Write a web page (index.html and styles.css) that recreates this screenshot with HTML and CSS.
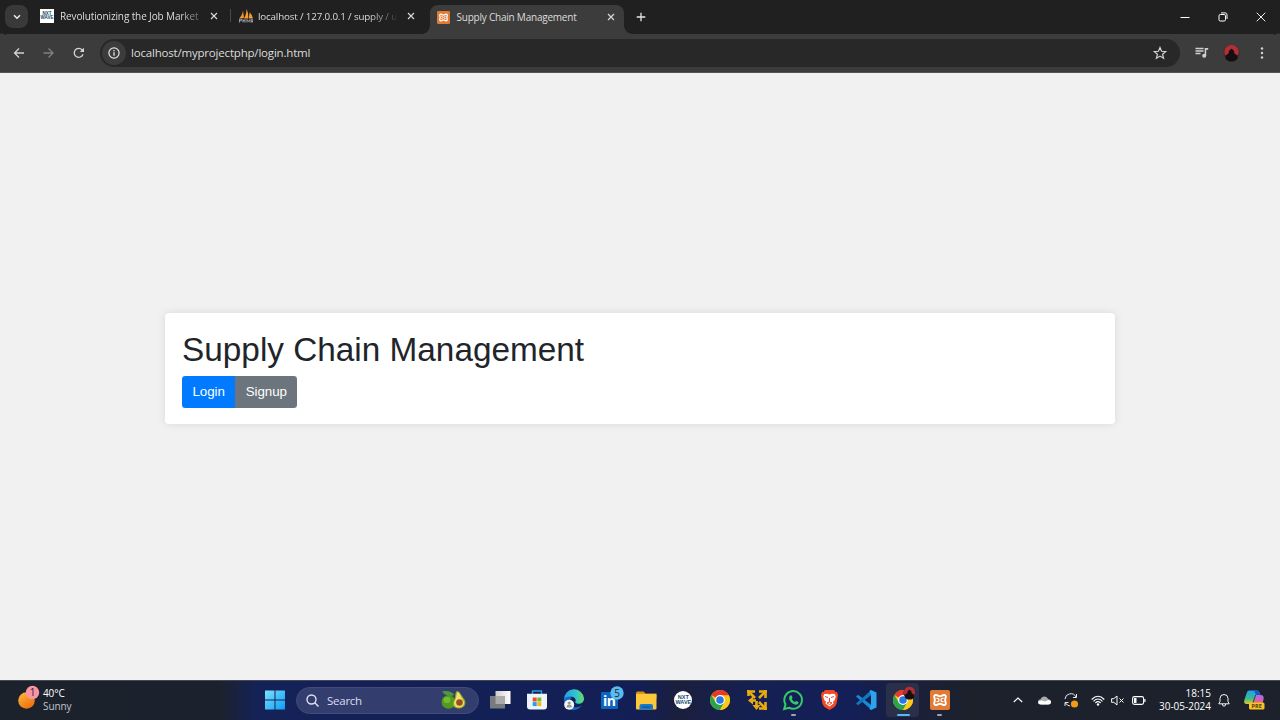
FILE: index.html
```html
<!DOCTYPE html>
<html lang="en">
<head>
<meta charset="utf-8">
<title>Supply Chain Management</title>
<link rel="stylesheet" href="styles.css">
</head>
<body>
<svg class="defs" width="0" height="0">
  <symbol id="chrome" viewBox="0 0 20 20">
    <circle cx="10" cy="10" r="10" fill="#f8c51c"/>
    <path d="M10 10 1.34 5A10 10 0 0 1 18.66 5z" fill="#e33b2e"/>
    <path d="M1.34 5A10 10 0 0 0 10 20L14.3 12.5 10 10 5.7 12.5z" fill="#2ba24c"/>
    <path d="M10 5.2h8.8A10 10 0 0 1 10 20l4.3-7.5z" fill="#fbc916"/>
    <circle cx="10" cy="10" r="4.9" fill="#fff"/><circle cx="10" cy="10" r="3.8" fill="#2878e8"/>
  </symbol>
  <symbol id="xampp" viewBox="0 0 20 20">
    <rect width="20" height="20" rx="2" fill="#e07a34"/>
    <path d="M7 5.200C4.500 4.300 3.700 6 4.500 8c.4 1 .4 3 0 4-.8 2 0 3.700 2.500 2.800 1.200-.5 1.800-1 3-1s1.800.5 3 1c2.500.9 3.300-.8 2.500-2.800-.4-1-.4-3 0-4 .8-2 0-3.700-2.500-2.800-1.200.5-1.800 1-3 1s-1.800-.5-3-1z" fill="none" stroke="#fff" stroke-width="2"/>
    <path d="M6.500 8.300h1q1.500 0 1.500 1.700t-1.500 1.700h-1M13.500 8.300h-1Q11 8.300 11 10t1.500 1.700h1" fill="none" stroke="#fff" stroke-width="1.300"/>
  </symbol>
  <symbol id="close" viewBox="0 0 8 8"><path d="m1 1 6 6M7 1 1 7" stroke="#d8d8d8" stroke-width="1.200"/></symbol>
  <symbol id="avatar" viewBox="0 0 18 18">
    <circle cx="9" cy="9" r="8.500" fill="#45282b"/><path d="M2 11C0 5 4 .5 9 .5S18 5 16 11z" fill="#b52e37"/>
    <path d="M2.500 13c1-2 2-3 3.500-3.500C5.500 7 7.500 5 9 4.500c1.500.5 3.500 2.500 3 5 1.500.5 2.500 1.500 3.500 3.500 0 3.500-3 5-6.500 5S2.500 16.500 2.500 13z" fill="#160f12"/>
  </symbol>
</svg>

<header class="tabstrip">
  <button class="tab-search"><svg width="8" height="6" viewBox="0 0 8 6"><path d="m1 1.200 3 3 3-3" fill="none" stroke="#eee" stroke-width="1.500"/></svg></button>
  <div class="tab tab-first">
    <span class="favicon nxt-fav"><i>NXT</i><i>WAVE</i></span>
    <span class="tab-title fade">Revolutionizing the Job Market</span>
    <svg class="tab-x" width="8" height="8"><use href="#close"/></svg>
  </div>
  <div class="tab tab-second">
    <svg class="favicon" width="14" height="14" viewBox="0 0 14 14"><path d="M0 9.500C2 8 3.500 5 4 1.500L5 9zM5 9.500C6.500 7 7.500 4 7.500 0 9 3 9.500 6 9.200 9.500zM9.800 9.500l.8-6C12.500 5 13.500 7.500 14 9.500z" fill="#f39b2b"/><path d="M.5 13.500v-3.300h2v1.500h-2M4 10v3.500M6 10v3.500M4 11.700h2M8 13.500v-3l1.500 2 1.500-2v3M12.300 13.500l.7-3.300.7 3.300" fill="none" stroke="#a4a7b8" stroke-width=".9"/></svg>
    <span class="tab-title long fade-more">localhost / 127.0.0.1 / supply / u</span>
    <svg class="tab-x" width="8" height="8"><use href="#close"/></svg>
  </div>
  <div class="tab tab-active">
    <svg class="favicon" width="13" height="13"><use href="#xampp"/></svg>
    <span class="tab-title active-title">Supply Chain Management</span>
    <svg class="tab-x" width="8" height="8"><use href="#close"/></svg>
  </div>
  <svg class="new-tab" width="10" height="10" viewBox="0 0 10 10"><path d="M5 .7v8.600M.7 5h8.600" stroke="#e6e6e6" stroke-width="1.300"/></svg>
  <div class="window-controls">
    <svg width="10" height="10" viewBox="0 0 10 10"><path d="M.5 5.500h9" stroke="#fff"/></svg>
    <svg width="10" height="10" viewBox="0 0 10 10" fill="none" stroke="#fff"><rect x="1" y="2.500" width="6.500" height="6.500" rx="1.300"/><path d="M3 .9h4.200Q9 .9 9 2.800V7"/></svg>
    <svg width="10" height="10" viewBox="0 0 10 10"><path d="m.7.7 8.600 8.600M9.300.7.700 9.300" stroke="#eee"/></svg>
  </div>
</header>

<nav class="toolbar">
  <svg class="nav-icon" width="12" height="12" viewBox="0 0 12 12" fill="none" stroke="#d2d2d2" stroke-width="1.300"><path d="M11 6H1.500M6 1.500 1.500 6 6 10.500"/></svg>
  <svg class="nav-icon" width="12" height="12" viewBox="0 0 12 12" fill="none" stroke="#808080" stroke-width="1.300"><path d="M.5 6H10M5.500 1.500 10 6l-4.500 4.500"/></svg>
  <svg class="nav-icon" width="12" height="12" viewBox="0 0 12 12"><path d="M10 7.300A4.500 4.500 0 1 1 9 2.700L10.200 4" fill="none" stroke="#d6d6d6" stroke-width="1.300"/><path d="M11 .7V5H6.800z" fill="#d6d6d6"/></svg>
  <div class="address">
    <span class="site-info"><svg width="12" height="12" viewBox="0 0 12 12"><circle cx="6" cy="6" r="5.100" fill="none" stroke="#e6e6e6" stroke-width="1.200"/><path d="M6 5.300v3.500M6 3v1.300" stroke="#e6e6e6" stroke-width="1.300"/></svg></span>
    <span class="url">localhost/myprojectphp/login.html</span>
    <svg class="star" width="14" height="14" viewBox="0 0 14 14"><path d="m7 1.500 1.600 3.800 4.100.3-3.100 2.700 1 4L7 10.100l-3.600 2.200 1-4-3.100-2.700 4.100-.3z" fill="none" stroke="#d4d4d4" stroke-width="1.200"/></svg>
  </div>
  <svg class="media" width="14" height="12" viewBox="0 0 14 12"><path d="M.5 1.500h8M.5 4h8M.5 6.500h5" stroke="#cfcfcf" stroke-width="1.300"/><path d="M9.700 8.500V1h3.500v1.700h-2v5.800z" fill="#cfcfcf"/><circle cx="9.200" cy="8.700" r="2" fill="#cfcfcf"/></svg>
  <svg class="profile" width="17" height="18"><use href="#avatar"/></svg>
  <svg class="menu" width="4" height="12" viewBox="0 0 4 12" fill="#d4d4d4"><circle cx="2" cy="1.500" r="1.200"/><circle cx="2" cy="6" r="1.200"/><circle cx="2" cy="10.500" r="1.200"/></svg>
</nav>

<main class="page">
  <section class="card">
    <h1>Supply Chain Management</h1>
    <div class="btn-group"><a class="btn btn-primary">Login</a><a class="btn btn-secondary">Signup</a></div>
  </section>
</main>

<footer class="taskbar">
  <div class="weather">
    <svg width="23" height="26" viewBox="0 0 23 26"><defs><linearGradient id="sun" x2=".7" y2="1"><stop stop-color="#f9bd3f"/><stop offset="1" stop-color="#ef6c0e"/></linearGradient></defs><circle cx="8.500" cy="15.500" r="8.300" fill="url(#sun)"/><circle cx="14.500" cy="7.500" r="6.700" fill="#f895a5"/><text class="badge-text" x="14.500" y="11">1</text></svg>
    <p><b>40°C</b><span>Sunny</span></p>
  </div>
  <svg class="start" width="20" height="20" viewBox="0 0 20 20"><defs><linearGradient id="win" gradientUnits="userSpaceOnUse" x1="0" y1="0" x2="20" y2="20"><stop stop-color="#7ce3ff"/><stop offset="1" stop-color="#0c9af5"/></linearGradient></defs><path d="M0 .5h9.500v9H0zM10.500.5H20v9h-9.500zM0 10.500h9.500v9H0zM10.500 10.500H20v9h-9.500z" fill="url(#win)"/></svg>
  <div class="search">
    <svg width="13" height="13" viewBox="0 0 13 13" fill="none" stroke="#dfe2ef" stroke-width="1.400"><circle cx="5.500" cy="5.500" r="4.500"/><path d="m8.800 8.800 3.700 3.700"/></svg>
    <span>Search</span>
    <svg class="avocado" width="26" height="20" viewBox="0 0 26 20"><ellipse cx="7.500" cy="12" rx="7" ry="6.700" fill="#529b20"/><ellipse cx="6" cy="10" rx="3.500" ry="3" fill="#78b932"/><path d="M1 1.500Q9-.5 13.500 5 6 8 1 1.500z" fill="#4c9a3e"/><path d="M16 1c3 0 4 4 6.500 7 5 6-.5 11-5 10.500-5 0-7.500-4-4.500-8.500C15 7 13.500 2 16 1z" fill="#8bab2b"/><path d="M16.500 2c2.500 1 3 4 5 7 4 5 0 8.800-4 8.500-4 0-5.500-4-3.500-7.500C16 7 15 4 16.500 2z" fill="#f3df6a"/><circle cx="18.500" cy="12.500" r="3.300" fill="#995020"/></svg>
  </div>
  <div class="apps">
    <span class="app"><svg width="21" height="20" viewBox="0 0 21 20"><defs><linearGradient id="tv" x2="1"><stop stop-color="#ccc"/><stop offset="1" stop-color="#fff"/></linearGradient></defs><rect x="5.500" y="1" width="15" height="13" fill="url(#tv)"/><rect y="6" width="15" height="12.500" fill="#777b80"/><path d="M5.500 6H15v8H5.500z" fill="#aaa"/></svg></span>
    <span class="app"><svg width="20" height="20" viewBox="0 0 20 20"><path d="M5.500 5V1h9v4" fill="none" stroke="#21a1df" stroke-width="1.400"/><path d="M0 3.800h20v12.700q0 3-3 3H3q-3 0-3-3z" fill="#eef4fb"/><path d="M5.700 7.500h4v4h-4z" fill="#e6512c"/><path d="M10.300 7.500h4v4h-4z" fill="#7cb923"/><path d="M5.700 12.100h4v4h-4z" fill="#2b9ce6"/><path d="M10.300 12.100h4v4h-4z" fill="#f5b814"/></svg></span>
    <span class="app"><svg width="20" height="20" viewBox="0 0 20 20"><defs><linearGradient id="edge" x2="1"><stop stop-color="#279be6"/><stop offset=".6" stop-color="#31c6cb"/><stop offset="1" stop-color="#6bdb62"/></linearGradient></defs><path d="M0 10A10 10 0 0 1 20 8.500c0 4-3 5.500-6 5.200-3-.3-3-1.500-2.300-3C12 8 9 6 5 7Q1 8 0 10z" fill="url(#edge)"/><path d="M0 10c1-4 6-4 8-2-4 2-3 8 2 9 4 .8 7-1 8-2-3 5-9 6-12 4.500Q0 17 0 10z" fill="#126fc6"/><circle cx="5.200" cy="14.800" r="5" fill="#f6f6f6"/><circle cx="5.200" cy="13" r="1.600" fill="#999"/><path d="M2.500 17.500q0-3 2.700-3t2.700 3z" fill="#999"/></svg></span>
    <span class="app"><svg class="linkedin" width="26" height="24" viewBox="0 0 26 24"><rect x="1" y="6" width="17" height="17" rx="1" fill="#0b66c2"/><text class="in" x="3" y="20">in</text><circle cx="17" cy="7" r="6.700" fill="#57bcf2"/><text class="badge-text" x="17" y="10.500">5</text></svg></span>
    <span class="app"><svg width="21" height="19" viewBox="0 0 21 19"><path d="M0 2Q0 .5 1.500.5h6l2 2h11v5H0z" fill="#dc9410"/><rect y="3" width="20.500" height="15.500" rx="1" fill="#fbc83b"/><path d="M3.500 18.500V15q0-2 2-2h9.500q2 0 2 2v3.500z" fill="#167bcc"/><path d="M6 16h8.500" stroke="#0d5798" stroke-width="1.200"/></svg></span>
    <span class="app"><span class="nxt"><i>NXT</i><i>WAVE</i></span></span>
    <span class="app"><svg width="20" height="20"><use href="#chrome"/></svg></span>
    <span class="app"><svg width="20" height="20" viewBox="0 0 20 20"><g fill="none" stroke="#e9ab12" stroke-width="2.600"><path d="M2 2l6 6M18 18l-6-6M18 2l-6 6"/><path d="M0 1.500h8M1.500 0v6M12 1.500h8M18.500 0v8M18.500 12v8M20 18.500h-8M9 10.500H4M9.500 11v5"/></g><path d="m1 10.500 5-4v8zM9.500 20l-4-5h8z" fill="#e9ab12"/></svg></span>
    <span class="app running"><svg width="21" height="20" viewBox="0 0 21 20"><path d="M1.200 19 2.500 14.300A8.800 8.800 0 1 1 6 17.700z" fill="none" stroke="#36c96a" stroke-width="2"/><path d="M7.300 5.500c.8-.7 1.400-.2 1.600.6l.6 1.400c.2.500-.6 1-.8 1.500.7 1.500 1.700 2.400 3.200 3.100.6-.3 1-1.300 1.500-1l2 1c.5.500-.3 2-1.300 2.400-2 .7-4.800-.9-6.400-2.800C5.700 9.300 5.500 7 7.300 5.500z" fill="#36c96a"/></svg></span>
    <span class="app"><svg width="17" height="20" viewBox="0 0 17 20"><path d="M4 0h9l1.500 2L16 2l1 3-1.500 9-2 3-5 3-5-3-2-3L0 5l1-3h1.500z" fill="#f14825"/><path d="m3.200 4 3-.3 2.300.8 2.300-.8 3 .3 1 2.500-1.300 4-1.500 1 .5 2-4 3-4-3 .5-2-1.500-1-1.300-4z" fill="#fff"/><path d="m4 6.500 3 1M13 6.500l-3 1M8.500 8v4M6 13l2.500-1 2.500 1-2.500 1.500z" fill="none" stroke="#f14825" stroke-width="1"/></svg></span>
    <span class="app"><svg width="21" height="20" viewBox="0 0 21 20"><path d="m0 6.500 2-1.700 13 10v4.700z" fill="#168bd5"/><path d="m0 13.500 2 1.700 13-10V.3z" fill="#1178bd"/><path d="m15 0 5.500 2.500v15L15 20l-1.500-1 1.500-4V5l-1.500-4z" fill="#2ca4ed"/></svg></span>
    <span class="app current"><svg width="23" height="25" viewBox="0 0 23 25"><use href="#chrome" x="0" y="4" width="20" height="20"/><use href="#avatar" x="10" y="0" width="13" height="14"/></svg></span>
    <span class="app running"><svg width="20" height="20"><use href="#xampp"/></svg></span>
  </div>
  <div class="tray">
    <svg class="chevron" width="10" height="6" viewBox="0 0 10 6"><path d="m.8 5 4.200-4 4.200 4" fill="none" stroke="#fff" stroke-width="1.200"/></svg>
    <svg class="cloud" width="13" height="9" viewBox="0 0 13 9"><path d="M3 8.500Q0 8.500 0 6t2.700-2.700C3.500-.5 9-.5 10 3q3 .5 3 3t-2.500 2.500z" fill="#a9abaf"/><path d="M0 6.500Q1 4 4 4.500l3 1L10.500 4Q13 4 13 6.500 12.700 8.500 10 8.500H3q-2.500 0-3-2z" fill="#fff"/></svg>
    <svg class="sync" width="15" height="15" viewBox="0 0 15 15"><path d="M1 6A5.800 5.800 0 0 1 12 4M12.500 1v3.500H9M1 13V9.500h3.500M1.500 10A6 6 0 0 0 6 13" fill="none" stroke="#e8e8e8"/><circle cx="10.500" cy="11" r="3.600" fill="#f59a13"/></svg>
    <svg class="wifi" width="14" height="11" viewBox="0 0 14 11"><g fill="none" stroke="#fff" stroke-width="1.100"><path d="M.7 4.500q6.300-6.500 12.600 0M2.500 6.300q4.500-4.600 9 0M4.400 8q2.600-2.600 5.200 0"/></g><circle cx="7" cy="9.500" r="1.200" fill="#fff"/></svg>
    <svg class="mute" width="14" height="11" viewBox="0 0 14 11" fill="none" stroke="#fff"><path d="M.6 3.700h2.200L6 1v9L2.800 7.300H.6zM8.500 3.500l4 4M12.500 3.500l-4 4"/></svg>
    <svg class="battery" width="14" height="9" viewBox="0 0 14 9"><rect x=".6" y=".6" width="11" height="7.800" rx="1.800" fill="none" stroke="#fff" stroke-width="1.100"/><path d="M2 2h2.500v5H2zM12.300 3h1.200v3h-1.200z" fill="#fff"/></svg>
    <p class="clock"><span>18:15</span><span>30-05-2024</span></p>
    <svg class="bell" width="12" height="13" viewBox="0 0 12 13"><path d="M.8 9.800 2 7.500v-3a4 4 0 0 1 8 0v3l1.200 2.300zM4.300 10q0 2.200 1.700 2.200T7.700 10" fill="none" stroke="#f3f3f3"/></svg>
    <svg class="copilot" width="21" height="20" viewBox="0 0 21 20"><defs><linearGradient id="cl" x2="0" y2="1"><stop stop-color="#249df3"/><stop offset=".6" stop-color="#39bd8d"/><stop offset="1" stop-color="#e9c72a"/></linearGradient><linearGradient id="cr" x2="0" y2="1"><stop stop-color="#a66bf3"/><stop offset="1" stop-color="#ef6277"/></linearGradient></defs><path d="M5 .5h8q2 0 2.500 2l.8 2.500h-5L8 14H3q-4 0-2.500-4.500l2-6Q3.200.5 5 .5z" fill="url(#cl)"/><path d="M12 5h4.500q4 0 3 4.500l-1 4H9z" fill="url(#cr)"/><path d="M10 .5h3q2 0 2.500 2l.8 2.500H12z" fill="#1b56c8"/><rect x="5" y="12.500" width="15.500" height="7" rx="1.500" fill="#f8c226"/><text class="pre" x="12.700" y="18.200">PRE</text></svg>
  </div>
</footer>
</body>
</html>
```
FILE: styles.css
```css
* { box-sizing: border-box; }
body { margin: 0; width: 1280px; height: 720px; overflow: hidden; display: flex; flex-direction: column; background: #3c3c3c; font-family: "Open Sans", "Noto Sans", sans-serif; color: #dcdcdc; }
svg { display: block; flex: none; overflow: visible; }
p { margin: 0; }
i { font-style: normal; }
.defs { position: absolute; }

.tabstrip { height: 34px; flex: none; display: flex; align-items: center; background: #202020; border-bottom: 1px solid #2c2c2c; }
.tab-search { width: 23px; height: 23px; margin-left: 5px; padding: 0; border: 0; border-radius: 8px; background: #393939; display: flex; align-items: center; justify-content: center; }
.tab { display: flex; align-items: center; height: 29px; align-self: flex-end; padding-bottom: 5px; font-size: 10px; }
.tab-first { width: 202px; padding-left: 12px; }
.tab-second { width: 200px; padding-left: 9px; background: linear-gradient(#4a4a4a, #4a4a4a) no-repeat 0 5px / 1px 13px; }
.tab-active { position: relative; width: 194px; padding-left: 7px; background: #3c3c3c; border-radius: 8px 8px 0 0; margin-bottom: -1px; }
.tab-active::before, .tab-active::after { content: ""; position: absolute; bottom: 0; width: 8px; height: 8px; }
.tab-active::before { left: -8px; background: radial-gradient(circle at 0 0, transparent 7.500px, #3c3c3c 8px); }
.tab-active::after { right: -8px; background: radial-gradient(circle at 100% 0, transparent 7.500px, #3c3c3c 8px); }
.favicon { flex: none; }
.nxt-fav { width: 14px; height: 14px; background: #fff; color: #17466c; font: bold 4.500px/4px "Liberation Sans", sans-serif; display: flex; flex-direction: column; align-items: center; justify-content: center; }
.tab-title { flex: none; width: 139px; margin-left: 6px; white-space: nowrap; letter-spacing: -.12px; }
.long { width: 138px; margin-left: 5px; font-size: 9.800px; letter-spacing: -.16px; }
.fade { -webkit-mask: linear-gradient(90deg, #000 85%, #0005); mask: linear-gradient(90deg, #000 85%, #0005); }
.fade-more { -webkit-mask: linear-gradient(90deg, #000 80%, #0002); mask: linear-gradient(90deg, #000 80%, #0002); }
.tab-x { margin-left: 11px; }
.active-title { width: 139px; letter-spacing: -.22px; margin-left: 6.500px; }
.new-tab { margin-left: 12px; }
.window-controls { margin-left: auto; margin-right: 14px; display: flex; gap: 28px; }

.toolbar { height: 39px; flex: none; display: flex; align-items: center; background: #3c3c3c; border-bottom: 1px solid #555; padding: 0 0 0 13px; border-radius: 8px 8px 0 0; box-shadow: 0 -8px 0 -4px #202020; }
.nav-icon { margin-right: 18px; }
.nav-icon:nth-of-type(3) { margin-right: 15px; }
.address { width: 1080px; height: 28px; border-radius: 14px; background: #282828; display: flex; align-items: center; padding: 0 13px 0 2px; }
.site-info { width: 24px; height: 24px; border-radius: 50%; background: #3c3c3c; display: flex; align-items: center; justify-content: center; }
.url { margin: 0 0 1px 5px; font-size: 11.500px; letter-spacing: -.19px; }
.star { margin-left: auto; }
.media { margin-left: 15px; }
.profile { margin-left: 14px; }
.menu { margin-left: 20px; }

.page { flex: 1; background: #f1f1f1; padding: 240px 165px 0 165.400px; color: #212529; font-family: "Liberation Sans", Arial, sans-serif; }
.card { background: #fff; width: 950px; height: 111px; padding: 17px 16.670px 16px; border-radius: 4px; box-shadow: 0 0 8.300px rgba(0,0,0,.1); display: flex; flex-direction: column; align-items: flex-start; }
h1 { font-size: 33.330px; line-height: 40px; font-weight: 400; margin: 0; }
.btn-group { display: flex; margin-top: 6px; border-radius: 3.300px; overflow: hidden; }
.btn { font-size: 13.330px; line-height: 20px; padding: 6.200px 10.400px 5.400px; color: #fff; letter-spacing: -.04px; }
.btn-primary { background: #007bff; }
.btn-secondary { background: #6c757d; }

.taskbar { height: 40px; flex: none; display: flex; align-items: center; border-top: 1px solid #454852; font-size: 10px; color: #fff; background: linear-gradient(90deg, #1c222c 0, #1c222d 220px, #142258 258px, #131f54 640px, #1b1f3d 680px, #152052 750px, #131f57 850px, #1b2038 920px, #1c212c 970px); }
.weather { width: 265px; display: flex; align-items: center; padding-left: 18px; gap: 2px; }
.weather svg { margin-bottom: 5px; }
.weather p { display: flex; flex-direction: column; line-height: 13px; margin-bottom: 2px; letter-spacing: -.1px; }
.weather b { font-weight: 400; }
.weather span { color: #c2c5ca; }
.badge-text { font: 10px "Open Sans", sans-serif; fill: #351c22; text-anchor: middle; }
.start { margin-bottom: 1px; }
.search { width: 183px; height: 27px; margin: 0 3px 1px 11px; border-radius: 14px; background: #343e6e; border: 1px solid #424b79; display: flex; align-items: center; padding: 0 11px 0 9px; font-size: 11.500px; letter-spacing: -.25px; color: #dadded; }
.search span { margin-left: 8px; }
.avocado { margin-left: auto; }
.apps { display: flex; height: 39px; padding-bottom: 1px; }
.app { width: 36.620px; display: flex; align-items: center; justify-content: center; position: relative; }
.linkedin { margin: -5px 0 0 6px; }
.in { font: bold 14px "Open Sans", sans-serif; fill: #fff; letter-spacing: -.5px; }
.nxt { width: 18px; height: 18px; border-radius: 50%; background: #fff; color: #164c72; font: bold 5.500px/5px "Liberation Sans", sans-serif; display: flex; flex-direction: column; align-items: center; justify-content: center; }
.running::after, .current::after { content: ""; position: absolute; bottom: 3px; width: 5px; height: 2px; border-radius: 1px; background: #a0a3b0; }
.current::before { content: ""; position: absolute; left: 1px; right: 2px; top: 2px; bottom: 2px; border-radius: 4px; background: #2a304a; }
.current::after { width: 13px; background: #58b9ef; }
.current svg { position: relative; margin: -4px 0 0 3px; }
.tray { margin-left: auto; display: flex; align-items: center; padding: 0 15px 1px 0; }
.chevron { margin-bottom: 1px; }
.cloud { margin-left: 15px; }
.sync { margin-left: 13px; }
.wifi { margin-left: 12px; }
.mute { margin-left: 6px; }
.battery { margin-left: 7px; }
.clock { width: 65px; display: flex; flex-direction: column; text-align: right; line-height: 13px; white-space: nowrap; letter-spacing: -.02px; margin-bottom: 1px; }
.bell { margin-left: 7px; }
.copilot { margin-left: 14px; }
.pre { font: bold 5.500px "Open Sans", sans-serif; fill: #493a12; text-anchor: middle; }
```
